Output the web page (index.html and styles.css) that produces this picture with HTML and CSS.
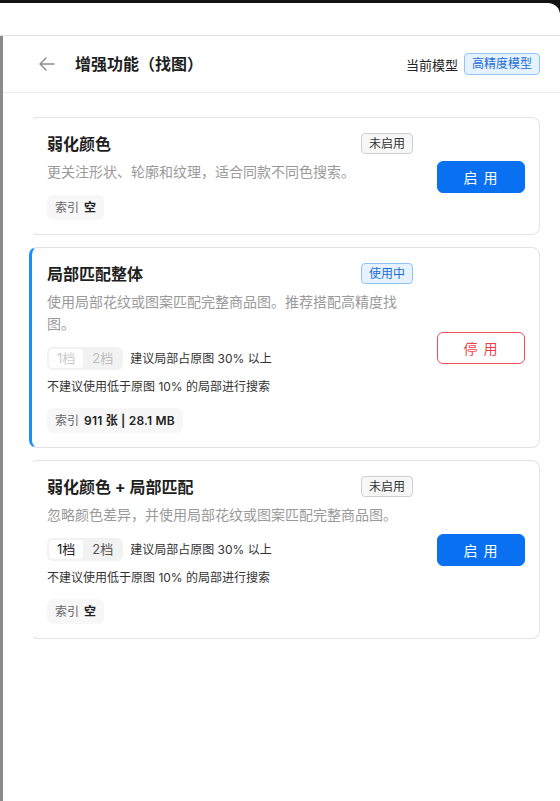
FILE: index.html
```html
<!DOCTYPE html>
<html lang="zh-CN">
<head>
<meta charset="utf-8">
<title>增强功能（找图）</title>
<link rel="stylesheet" href="styles.css">
</head>
<body>
<div class="sheet">
  <div class="topbar"></div>
  <div class="body-row">
    <div class="strip"></div>
    <div class="panel">
      <header class="header">
        <div class="header-left">
          <svg class="back" width="16" height="14" viewBox="0 0 16 14" aria-hidden="true">
            <path d="M15 7H1.5M7 1L1 7l6 6" fill="none" stroke="#8c8c8c" stroke-width="1.4" stroke-linecap="round" stroke-linejoin="round"/>
          </svg>
          <h1 class="title">增强功能（找图）</h1>
        </div>
        <div class="header-right">
          <span class="model-label">当前模型</span>
          <span class="badge badge-blue model-badge">高精度模型</span>
        </div>
      </header>

      <main class="list">
        <section class="card">
          <div class="card-main">
            <div class="card-head">
              <h2 class="card-title">弱化颜色</h2>
              <span class="badge badge-gray">未启用</span>
            </div>
            <p class="desc">更关注形状、轮廓和纹理，适合同款不同色搜索。</p>
            <div class="chip"><span class="chip-label">索引</span><span class="chip-value">空</span></div>
          </div>
          <button class="btn btn-primary">启 用</button>
        </section>

        <section class="card card-active">
          <div class="card-main">
            <div class="card-head">
              <h2 class="card-title">局部匹配整体</h2>
              <span class="badge badge-blue">使用中</span>
            </div>
            <p class="desc">使用局部花纹或图案匹配完整商品图。推荐搭配高精度找图。</p>
            <div class="level-row">
              <div class="segmented segmented-disabled">
                <span class="seg-item seg-on">1档</span>
                <span class="seg-item">2档</span>
              </div>
              <span class="level-hint">建议局部占原图 30% 以上</span>
            </div>
            <p class="note">不建议使用低于原图 10% 的局部进行搜索</p>
            <div class="chip"><span class="chip-label">索引</span><span class="chip-value">911 张 | 28.1 MB</span></div>
          </div>
          <button class="btn btn-danger">停 用</button>
        </section>

        <section class="card">
          <div class="card-main">
            <div class="card-head">
              <h2 class="card-title">弱化颜色 + 局部匹配</h2>
              <span class="badge badge-gray">未启用</span>
            </div>
            <p class="desc">忽略颜色差异，并使用局部花纹或图案匹配完整商品图。</p>
            <div class="level-row">
              <div class="segmented">
                <span class="seg-item seg-on">1档</span>
                <span class="seg-item">2档</span>
              </div>
              <span class="level-hint">建议局部占原图 30% 以上</span>
            </div>
            <p class="note">不建议使用低于原图 10% 的局部进行搜索</p>
            <div class="chip"><span class="chip-label">索引</span><span class="chip-value">空</span></div>
          </div>
          <button class="btn btn-primary">启 用</button>
        </section>
      </main>
    </div>
  </div>
</div>
</body>
</html>
```

FILE: styles.css
```css
* { box-sizing: border-box; }

html, body {
  margin: 0;
  padding: 0;
  height: 100%;
}

body {
  background: #121212;
  font-family: "Inter", "Noto Sans CJK SC", "Noto Sans", sans-serif;
  color: #222;
  overflow: hidden;
}

.sheet {
  margin-top: 3px;
  height: 798px;
  background: #fff;
  border-top-right-radius: 12px;
  display: flex;
  flex-direction: column;
}

.topbar {
  height: 33px;
  flex: none;
  border-bottom: 1px solid #e2e2e2;
}

.body-row {
  flex: 1;
  display: flex;
}

.strip {
  width: 3px;
  flex: none;
  background: #8a8a8a;
}

.panel {
  flex: 1;
  background: #fff;
}

.header {
  height: 57px;
  border-bottom: 1px solid #ececec;
  display: flex;
  align-items: center;
  justify-content: space-between;
  padding: 0 20px 0 36px;
}

.header-left {
  display: flex;
  align-items: center;
  gap: 20px;
}

.back { display: block; }

.title {
  margin: 0;
  font-size: 16px;
  font-weight: 700;
  line-height: 22px;
  color: #1f1f1f;
}

.header-right {
  display: flex;
  align-items: center;
  gap: 6px;
}

.model-label {
  font-size: 13px;
  color: #222;
}

.badge {
  display: inline-block;
  font-size: 12px;
  line-height: 19px;
  padding: 0 7px;
  border-radius: 4px;
  border: 1px solid;
  white-space: nowrap;
}

.model-badge { padding: 0 7px; line-height: 20px; }

.badge-blue {
  background: #e6f2ff;
  border-color: #8fc4fb;
  color: #1b6ed6;
}

.badge-gray {
  background: #f7f7f7;
  border-color: #cfcfcf;
  color: #333;
}

.list {
  padding: 24px 20px 0 26px;
  display: flex;
  flex-direction: column;
  gap: 12px;
}

.card {
  display: flex;
  align-items: center;
  border: 1px solid #e3e3e3;
  border-left: 3px solid transparent;
  border-radius: 8px;
  padding: 15px 14px 14px 15px;
}

.card-active {
  border-left-color: #1a8cff;
}

.card-main {
  flex: 1;
  min-width: 0;
}

.card-head {
  display: flex;
  align-items: center;
  justify-content: space-between;
  height: 21px;
}

.card-title {
  margin: 0;
  font-size: 16px;
  font-weight: 700;
  line-height: 22px;
  color: #1f1f1f;
}

.desc {
  margin: 7px 0 0;
  font-size: 14px;
  line-height: 22px;
  color: #9a9a9a;
}

.level-row {
  margin-top: 12px;
  display: flex;
  align-items: center;
  gap: 7px;
}

.segmented {
  display: inline-flex;
  background: #f2f2f2;
  border-radius: 6px;
  padding: 2px;
  gap: 1px;
}

.seg-item {
  font-size: 13px;
  line-height: 19px;
  padding: 0 8px;
  border-radius: 4px;
  color: #555;
}

.seg-item.seg-on {
  background: #fff;
  color: #222;
}

.segmented-disabled .seg-item { color: #bdbdbd; }
.segmented-disabled .seg-item.seg-on { color: #cacaca; }

.level-hint {
  font-size: 12px;
  line-height: 18px;
  color: #333;
}

.note {
  margin: 8px 0 0;
  font-size: 12px;
  line-height: 18px;
  color: #333;
}

.chip {
  display: inline-flex;
  align-items: center;
  gap: 5px;
  margin-top: 12px;
  background: #f7f7f7;
  border-radius: 6px;
  padding: 4px 8px;
  font-size: 12px;
  line-height: 17px;
}

.chip-label { color: #666; }
.chip-value { color: #222; font-weight: 600; letter-spacing: 0.2px; }

.btn {
  flex: none;
  width: 88px;
  height: 32px;
  margin-left: 24px;
  border-radius: 6px;
  font-family: inherit;
  font-size: 14px;
  letter-spacing: 1px;
  cursor: pointer;
}

.btn-primary {
  background: #0a70f2;
  border: 1px solid #0a70f2;
  color: #fff;
}

.btn-danger {
  background: #fff;
  border: 1px solid #f24c58;
  color: #ee3f4c;
}
```
